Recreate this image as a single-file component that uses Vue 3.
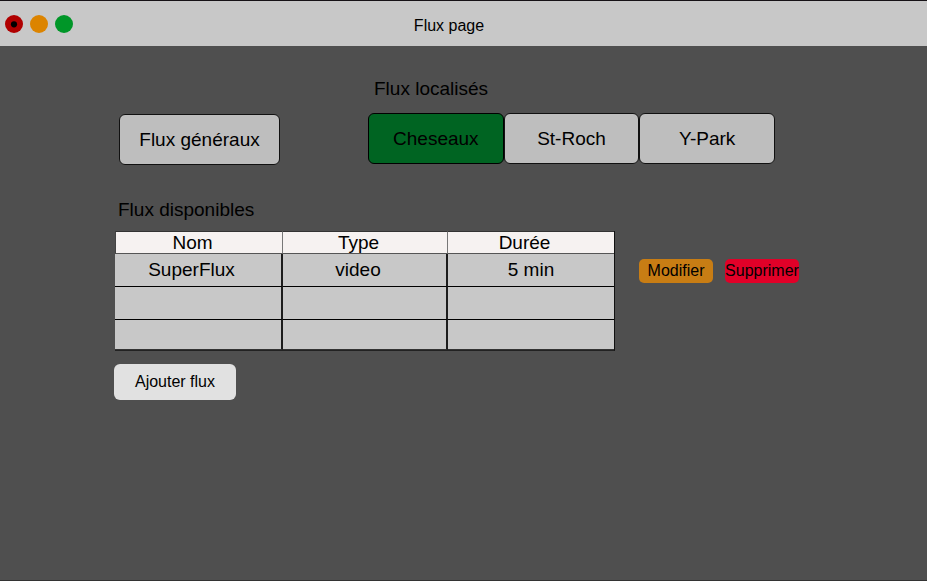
<script setup>
import { ref } from 'vue'

const sites = ['Cheseaux', 'St-Roch', 'Y-Park']
const selected = ref('Cheseaux')
const rows = [
  { nom: 'SuperFlux', type: 'video', duree: '5 min' },
  { nom: '', type: '', duree: '' },
  { nom: '', type: '', duree: '' }
]
</script>

<template>
  <div class="window">
    <header class="titlebar">
      <div class="lights">
        <button class="light close" type="button" aria-label="Fermer">
          <svg viewBox="0 0 18 18" width="18" height="18" aria-hidden="true"><circle cx="9" cy="9.3" r="3.1" /></svg>
        </button>
        <button class="light minimise" type="button" aria-label="Réduire"></button>
        <button class="light zoom" type="button" aria-label="Agrandir"></button>
      </div>
      <h1 class="title">Flux page</h1>
    </header>

    <main class="content">
      <section class="selectors">
        <button class="choice general" type="button">Flux généraux</button>
        <div class="local">
          <h2 class="heading">Flux localisés</h2>
          <div class="sites">
            <button
              v-for="site in sites"
              :key="site"
              type="button"
              class="choice"
              :class="{ active: site === selected }"
              :aria-pressed="site === selected"
              @click="selected = site"
            >{{ site }}</button>
          </div>
        </div>
      </section>

      <section class="available">
        <h2 class="heading">Flux disponibles</h2>
        <div class="listing">
          <div class="table-area">
            <table class="flux">
              <thead>
                <tr>
                  <th scope="col">Nom</th>
                  <th scope="col">Type</th>
                  <th scope="col">Durée</th>
                </tr>
              </thead>
              <tbody>
                <tr v-for="(row, i) in rows" :key="i">
                  <td>{{ row.nom }}</td>
                  <td>{{ row.type }}</td>
                  <td class="duration">{{ row.duree }}</td>
                </tr>
              </tbody>
            </table>
          </div>
          <div class="actions">
            <button class="action edit" type="button">Modifier</button>
            <button class="action delete" type="button">Supprimer</button>
          </div>
        </div>
        <button class="add" type="button">Ajouter flux</button>
      </section>
    </main>
  </div>
</template>

<style>
body {
  background: #4f4f4f;
}
</style>

<style scoped>
.window {
  box-sizing: border-box;
  min-height: 100vh;
  border-top: 1px solid #161216;
  border-bottom: 1px solid #333333;
  background: #4f4f4f;
  color: #000;
  font-family: "Liberation Sans", Arial, sans-serif;
  font-size: 16px;
}

button {
  box-sizing: border-box;
  margin: 0;
  padding: 0;
  border: 0;
  color: inherit;
  font: inherit;
  white-space: nowrap;
  cursor: pointer;
}

.titlebar {
  display: grid;
  grid-template-columns: 1fr auto 1fr;
  align-items: center;
  height: 45px;
  padding: 0 34px 0 5px;
  background: #c8c8c8;
}

.lights {
  display: flex;
  gap: 7px;
}

.light {
  width: 18px;
  height: 18px;
  border-radius: 50%;
}

.light svg {
  display: block;
}

.close {
  background: #b00000;
}

.minimise {
  background: #dc8400;
}

.zoom {
  background: #009628;
}

.title {
  margin: 0;
  padding-top: 4px;
  font-size: 16px;
  font-weight: 400;
  line-height: 20px;
}

.content {
  padding: 31px 24px 24px 114px;
}

.selectors {
  display: flex;
  align-items: flex-end;
  gap: 88px;
  padding-left: 5px;
}

.heading {
  margin: 0;
  font-size: 19px;
  font-weight: 400;
  line-height: 24px;
}

.choice {
  height: 51px;
  border: 1px solid #111;
  border-radius: 6px;
  background: #bebebe;
  font-size: 19px;
}

.general {
  flex: 0 1 161px;
}

.local {
  flex: 0 1 407px;
  padding-bottom: 1px;
}

.local .heading {
  padding: 0 0 12px 6px;
}

.sites {
  display: grid;
  grid-template-columns: repeat(3, 1fr);
}

.active {
  border-color: #000;
  background: #006422;
}

.available {
  padding-top: 33px;
}

.available > .heading {
  padding: 0 0 9px 4px;
}

.listing {
  display: flex;
  align-items: flex-start;
  gap: 24px;
  padding-left: 1px;
}

.table-area {
  flex: 0 1 500px;
}

.flux {
  width: 100%;
  table-layout: fixed;
  border-spacing: 0;
  border-right: 1px solid #111;
  border-bottom: 1px solid #222;
  font-size: 19px;
}

.flux th,
.flux td {
  box-sizing: border-box;
  padding: 0 13px 0 0;
  text-align: center;
  font-weight: 400;
}

.flux th {
  height: 23px;
  border-top: 1px solid #333;
  border-right: 1px solid #777;
  border-bottom: 1px solid #555;
  background: #f6f2f1;
  line-height: 21px;
}

.flux th:first-child {
  width: 168px;
  border-left: 1px solid #444;
}

.flux th:nth-child(2) {
  width: 165px;
}

.flux td {
  height: 33px;
  border-right: 2px solid #1c1c1c;
  border-bottom: 1px solid #000;
  background: #c8c8c8;
  line-height: 32px;
}

.flux th:last-child,
.flux td:last-child {
  border-right: 0;
}

.flux .duration {
  padding-right: 0;
}

.flux tbody tr:last-child td {
  height: 30px;
  border-bottom: 1px solid #333;
}

.actions {
  display: flex;
  gap: 12px;
  padding-top: 28px;
}

.action {
  width: 74px;
  height: 24px;
  border-radius: 5px;
}

.edit {
  background: #c87d14;
}

.delete {
  background: #e10028;
}

.add {
  width: 122px;
  height: 36px;
  margin-top: 13px;
  border-radius: 6px;
  background: #e1e1e1;
}
</style>
